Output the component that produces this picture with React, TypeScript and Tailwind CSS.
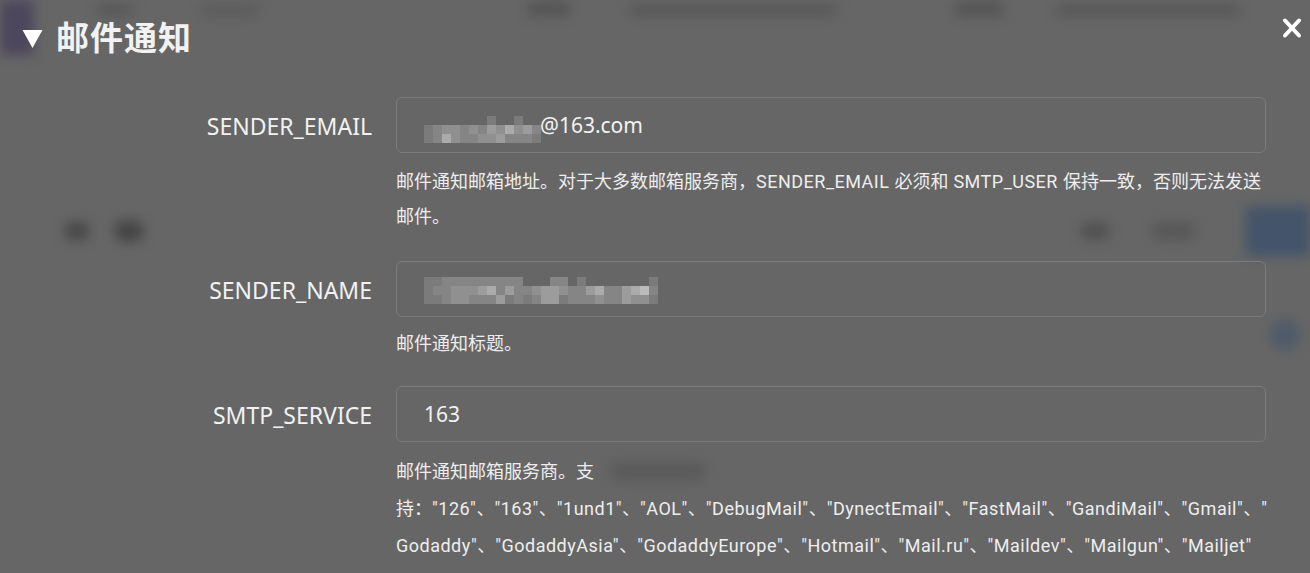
import { type ReactNode } from "react";

const SHADE: Record<string, string> = {
  "0": "bg-transparent",
  "1": "bg-[#717171]",
  "2": "bg-[#7b7b7b]",
  "3": "bg-[#858585]",
  "4": "bg-[#909090]",
  "5": "bg-[#9c9c9c]",
  "6": "bg-[#ababab]",
  "7": "bg-[#bbbbbb]",
};

// pixelated (masked) parts of the input values
const MOSAIC_EMAIL = [
  "0000000200200",
  "2344343546453",
  "2364334453332",
];

const MOSAIC_NAME = [
  "22333333333000330200000002",
  "23344456353345543356335673",
  "22344333523235523334335442",
];

function Mosaic({ rows }: { rows: string[] }) {
  return (
    <div className="flex flex-col">
      {rows.map((row, i) => (
        <div key={i} className="flex">
          {row.split("").map((c, j) => (
            <span key={j} className={`block h-[9px] w-[9px] ${SHADE[c]}`} />
          ))}
        </div>
      ))}
    </div>
  );
}

// latin runs get a little extra tracking, CJK stays on its own grid
function HelpLine({ text }: { text: string }) {
  const parts = text.split(/([\x20-\x7E]+)/).filter(Boolean);
  return (
    <div className="whitespace-nowrap">
      {parts.map((p, i) =>
        /^[\x20-\x7E]+$/.test(p) ? (
          <span key={i} className="tracking-[0.5px]">{p}</span>
        ) : (
          <span key={i}>{p}</span>
        )
      )}
    </div>
  );
}

type Field = {
  label: string;
  value: ReactNode;
  lines: string[];
  leading: string;
};

const FIELDS: Field[] = [
  {
    label: "SENDER_EMAIL",
    value: (
      <span className="flex items-center">
        <span className="mt-[6px] -mr-[1px]">
          <Mosaic rows={MOSAIC_EMAIL} />
        </span>
        <span>@163.com</span>
      </span>
    ),
    lines: [
      "邮件通知邮箱地址。对于大多数邮箱服务商，SENDER_EMAIL 必须和 SMTP_USER 保持一致，否则无法发送",
      "邮件。",
    ],
    leading: "leading-[35px]",
  },
  {
    label: "SENDER_NAME",
    value: <Mosaic rows={MOSAIC_NAME} />,
    lines: ["邮件通知标题。"],
    leading: "leading-[31px]",
  },
  {
    label: "SMTP_SERVICE",
    value: <span>163</span>,
    lines: [
      "邮件通知邮箱服务商。支",
      '持："126"、"163"、"1und1"、"AOL"、"DebugMail"、"DynectEmail"、"FastMail"、"GandiMail"、"Gmail"、"',
      'Godaddy"、"GodaddyAsia"、"GodaddyEurope"、"Hotmail"、"Mail.ru"、"Maildev"、"Mailgun"、"Mailjet"',
    ],
    leading: "leading-[37px]",
  },
];

// the settings page behind the dialog, only visible as a blur
function BlurredPage() {
  return (
    <div className="pointer-events-none absolute inset-0 flex flex-col blur-[6px]">
      <div className="flex h-[55px] items-start">
        <div className="h-[55px] w-[34px] shrink-0 bg-[#4c475c]" />
        <div className="ml-[63px] mt-[4px] h-[12px] w-[36px] rounded-full bg-[#585858]" />
        <div className="ml-[67px] mt-[4px] h-[12px] w-[60px] rounded-full bg-[#5c5c5c]" />
        <div className="ml-[268px] mt-[2px] h-[14px] w-[42px] rounded bg-[#545454]" />
        <div className="ml-[59px] mt-[4px] h-[12px] w-[208px] rounded-full bg-[#585858]" />
        <div className="ml-[118px] mt-[2px] h-[14px] w-[48px] rounded bg-[#545454]" />
        <div className="ml-[53px] mt-[4px] h-[12px] w-[184px] rounded-full bg-[#585858]" />
      </div>
      <div className="mt-[151px] flex h-[50px] items-center">
        <div className="ml-[64px] h-[20px] w-[26px] rounded-full bg-[#4a4a4a]" />
        <div className="ml-[24px] h-[22px] w-[30px] rounded-full bg-[#464646]" />
        <div className="ml-auto h-[18px] w-[30px] rounded-full bg-[#525252]" />
        <div className="ml-[42px] h-[18px] w-[44px] rounded-full bg-[#585858]" />
        <div className="ml-[50px] h-[50px] w-[64px] shrink-0 rounded-l bg-[#44546a]" />
      </div>
      <div className="mt-[64px] flex justify-end pr-[10px]">
        <div className="h-[30px] w-[30px] rounded-full bg-[#4e5a6a]" />
      </div>
      <div className="mt-[112px] flex pl-[610px]">
        <div className="h-[18px] w-[96px] rounded-full bg-[#5a5a5a]" />
      </div>
    </div>
  );
}

export default function App() {
  return (
    <div className="relative h-[573px] w-full overflow-hidden bg-[#666666] font-['Noto_Sans','Noto_Sans_CJK_SC',sans-serif] text-[#f2f2f2]">
      <BlurredPage />

      <div className="relative">
        {/* header */}
        <div className="flex h-[76px] items-start justify-between pl-[22px] pr-[8px]">
          <div className="flex h-full items-center gap-[13px]">
            <svg viewBox="0 0 20 20" className="mt-[1px] h-[20px] w-[21px]" fill="#ffffff">
              <polygon points="0,1 20,1 10,19" />
            </svg>
            <span className="text-[33px] font-bold tracking-[1px]">邮件通知</span>
          </div>
          <svg viewBox="0 0 20 20" className="mt-[18px] h-[20px] w-[20px]" stroke="#ffffff" strokeWidth="4" strokeLinecap="round">
            <path d="M3 2.5l14 15M17 2.5l-14 15" />
          </svg>
        </div>

        {/* fields */}
        <div className="flex flex-col gap-[27px] pt-[21px] pr-[44px]">
          {FIELDS.map(({ label, value, lines, leading }) => (
            <div key={label} className="grid grid-cols-[372px_minmax(0,1fr)] gap-x-[24px]">
              <div className="flex h-[56px] items-center justify-end pt-[2px] text-[23px]">{label}</div>
              <div className="flex h-[56px] items-center rounded-[6px] border border-[#7b7b7b] pl-[27px] pt-[2px] text-[21px]">
                {value}
              </div>
              <div />
              <div className={`mt-[11px] min-w-0 font-['Roboto','Noto_Sans_CJK_SC',sans-serif] text-[18px] text-[#eeeeee] ${leading}`}>
                {lines.map((l) => (
                  <HelpLine key={l} text={l} />
                ))}
              </div>
            </div>
          ))}
        </div>
      </div>
    </div>
  );
}
